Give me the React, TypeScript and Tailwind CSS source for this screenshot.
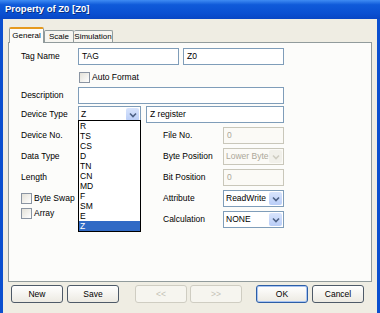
import type { ReactNode } from 'react';

const DEVICES = ['R', 'TS', 'CS', 'D', 'TN', 'CN', 'MD', 'F', 'SM', 'E', 'Z'];

function Chevron({ color }: { color: string }) {
  return (
    <svg width="8" height="6" viewBox="0 0 8 6">
      <path d="M1 1.5 L4 4.5 L7 1.5" fill="none" stroke={color} strokeWidth="1.6" />
    </svg>
  );
}

function TextBox({ value = '', w, disabled = false }: { value?: string; w: string; disabled?: boolean }) {
  return (
    <div
      className={[
        'h-[17px] border flex items-center px-[3px] shrink-0',
        w,
        disabled ? 'border-[#c9c7ba] bg-[#fbfaf6] text-[#aca899]' : 'border-[#7f9db9] bg-white',
      ].join(' ')}
    >
      {value}
    </div>
  );
}

function Combo({
  value,
  w,
  disabled = false,
  children,
}: {
  value: string;
  w: string;
  disabled?: boolean;
  children?: ReactNode;
}) {
  return (
    <div
      className={[
        'relative h-[17px] border flex items-center shrink-0',
        w,
        disabled ? 'border-[#c9c7ba] bg-[#fbfaf6] text-[#aca899]' : 'border-[#7f9db9] bg-white',
      ].join(' ')}
    >
      <span className="flex-1 pl-[2px] whitespace-nowrap overflow-hidden">{value}</span>
      <span
        className={[
          'w-[13px] h-[13px] mr-px shrink-0 grid place-items-center rounded-[2px]',
          disabled ? 'bg-[#f1f0ea]' : 'bg-[linear-gradient(to_bottom,#d8e4fc,#b9cdf7)]',
        ].join(' ')}
      >
        <Chevron color={disabled ? '#cfcdc2' : '#4d6185'} />
      </span>
      {children}
    </div>
  );
}

function Check({ label }: { label: string }) {
  return (
    <div className="flex items-center h-[11px] gap-[2px]">
      <span className="w-[11px] h-[11px] border border-[#8a94a2] bg-[linear-gradient(135deg,#e3e1d8,#ffffff)]" />
      <span>{label}</span>
    </div>
  );
}

function Btn({ label, w = 'w-[52px]', kind = 'normal' }: { label: string; w?: string; kind?: 'normal' | 'default' | 'disabled' }) {
  const style =
    kind === 'disabled'
      ? 'border-[#cfcdc2] text-[#c4c2b6] bg-[#f6f5ef]'
      : kind === 'default'
        ? 'border-[#2c5ea6] shadow-[inset_0_0_0_1px_#a9c4f2] bg-[linear-gradient(to_bottom,#ffffff,#eceae2)]'
        : 'border-[#4e5a68] bg-[linear-gradient(to_bottom,#ffffff,#eceae2)]';
  return (
    <div className={['h-[18px] rounded-[3px] border grid place-items-center shrink-0', w, style].join(' ')}>
      {label}
    </div>
  );
}

export default function App() {
  return (
    <div className="w-[380px] h-[313px] flex flex-col overflow-hidden font-['Liberation_Sans',Arial,sans-serif] text-[8.5px] text-black">
      {/* Title bar */}
      <div className="h-[19px] shrink-0 flex items-center pl-[5px] bg-[linear-gradient(to_bottom,#3f8cf3_0%,#0f5ad9_25%,#0a50d2_70%,#0846c4_100%)]">
        <span className="text-white font-bold text-[9.5px] [text-shadow:1px_1px_0_#0a2f80]">Property of Z0 [Z0]</span>
      </div>

      {/* Body */}
      <div className="flex-1 flex flex-col bg-[#efede3] border-x-[3px] border-[#0b4fcf]">
        {/* Tabs */}
        <div className="pt-[7px] pl-[6px] flex items-end h-[23px] shrink-0 text-[8px]">
          <div className="relative z-10 -mb-px h-[16px] w-[35px] bg-[#fcfcfa] border border-b-0 border-[#919b9c] border-t-[#e69a1e] border-t-2 rounded-t-[2px] flex items-center justify-center pb-px">
            General
          </div>
          <div className="h-[12px] w-[30px] bg-[#f6f5f0] border border-b-0 border-[#919b9c] rounded-t-[2px] flex items-center justify-center">
            Scale
          </div>
          <div className="h-[12px] w-[39px] bg-[#f6f5f0] border border-b-0 border-l-0 border-[#919b9c] rounded-t-[2px] flex items-center justify-center whitespace-nowrap">
            Simulation
          </div>
        </div>

        {/* Panel */}
        <div className="mx-[5px] h-[240px] shrink-0 border border-[#919b9c] bg-[#fcfcfa] pt-[5px] pl-[12px]">
          <div className="flex items-center">
            <span className="w-[57px]">Tag Name</span>
            <TextBox value="TAG" w="w-[101px]" />
            <span className="w-[4px]" />
            <TextBox value="Z0" w="w-[101px]" />
          </div>

          <div className="mt-[7px] pl-[58px]">
            <Check label="Auto Format" />
          </div>

          <div className="mt-[4px] flex items-center">
            <span className="w-[57px]">Description</span>
            <TextBox w="w-[206px]" />
          </div>

          <div className="mt-[2px] flex items-center relative z-20">
            <span className="w-[57px]">Device Type</span>
            <Combo value="Z" w="w-[63px]">
              <div className="absolute left-[-1px] top-[13px] w-[63px] border border-black bg-white flex flex-col">
                {DEVICES.map((d) => (
                  <div
                    key={d}
                    className={['h-[10px] leading-[10px] pl-[1px]', d === 'Z' ? 'bg-[#316ac5] text-white' : ''].join(' ')}
                  >
                    {d}
                  </div>
                ))}
              </div>
            </Combo>
            <span className="w-[5px]" />
            <TextBox value="Z register" w="w-[138px]" />
          </div>

          {/* Lower section */}
          <div className="mt-[4px] flex">
            <div className="w-[142px] flex flex-col">
              <div className="h-[17px] flex items-center">Device No.</div>
              <div className="mt-[4px] h-[17px] flex items-center">Data Type</div>
              <div className="mt-[4px] h-[17px] flex items-center">Length</div>
              <div className="mt-[7px]">
                <Check label="Byte Swap" />
              </div>
              <div className="mt-[4px]">
                <Check label="Array" />
              </div>
            </div>
            <div className="flex flex-col gap-[4px]">
              <div className="flex items-center">
                <span className="w-[60px]">File No.</span>
                <TextBox value="0" w="w-[61px]" disabled />
              </div>
              <div className="flex items-center">
                <span className="w-[60px]">Byte Position</span>
                <Combo value="Lower Byte" w="w-[61px]" disabled />
              </div>
              <div className="flex items-center">
                <span className="w-[60px]">Bit Position</span>
                <TextBox value="0" w="w-[61px]" disabled />
              </div>
              <div className="flex items-center">
                <span className="w-[60px]">Attribute</span>
                <Combo value="ReadWrite" w="w-[61px]" />
              </div>
              <div className="flex items-center">
                <span className="w-[60px]">Calculation</span>
                <Combo value="NONE" w="w-[61px]" />
              </div>
            </div>
          </div>
        </div>

        {/* Buttons */}
        <div className="mt-[3px] pl-[8px] flex items-center">
          <Btn label="New" />
          <span className="w-[4px]" />
          <Btn label="Save" />
          <span className="w-[16px]" />
          <Btn label="<<" kind="disabled" />
          <span className="w-[3px]" />
          <Btn label=">>" kind="disabled" />
          <span className="w-[14px]" />
          <Btn label="OK" kind="default" />
          <span className="w-[4px]" />
          <Btn label="Cancel" />
        </div>
      </div>
    </div>
  );
}
